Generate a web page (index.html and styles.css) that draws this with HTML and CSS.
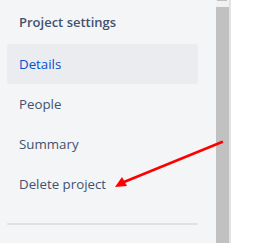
FILE: index.html
```html
<!DOCTYPE html>
<html>
<head>
<meta charset="utf-8">
<link rel="stylesheet" href="styles.css">
</head>
<body>
<div class="page">
  <nav class="sidebar">
    <div class="heading">Project settings</div>
    <ul class="menu">
      <li class="item active">Details</li>
      <li class="item">People</li>
      <li class="item">Summary</li>
      <li class="item">Delete project</li>
    </ul>
    <div class="divider"></div>
  </nav>
  <div class="scrollbar">
    <div class="track-top"><div class="nub"></div></div>
    <div class="thumb"></div>
  </div>
  <div class="edge"></div>
  <div class="rest"></div>
  <svg class="arrow" width="255" height="243" viewBox="0 0 255 243">
    <line x1="222" y1="142" x2="124" y2="182" stroke="#f00" stroke-width="2.5" stroke-linecap="round"/>
    <polygon points="115,187 122,177 127,186" fill="#f00"/>
  </svg>
</div>
</body>
</html>
```
FILE: styles.css
```css
html, body {
  margin: 0;
  padding: 0;
  background: #fff;
}
.page {
  position: relative;
  display: flex;
  width: 255px;
  height: 243px;
  overflow: hidden;
  font-family: "Open Sans", "Noto Sans", sans-serif;
}
.sidebar {
  width: 216px;
  flex: none;
  background: #f4f5f7;
  box-sizing: border-box;
  padding: 12px 18px 0 7px;
}
.heading {
  font-weight: 600;
  font-size: 13px;
  color: #42526e;
  padding-left: 12px;
  height: 20px;
  line-height: 20px;
  margin-bottom: 12px;
}
.menu {
  list-style: none;
  margin: 0;
  padding: 0;
}
.item {
  height: 40px;
  line-height: 40px;
  padding-left: 12px;
  font-size: 13.3px;
  color: #42526e;
  border-radius: 3px;
}
.item.active {
  background: #ebecf0;
  color: #0052cc;
}
.divider {
  margin-top: 19px;
  height: 2px;
  background: #dfe1e6;
  border-radius: 1px;
}
.scrollbar {
  width: 13px;
  flex: none;
  display: flex;
  flex-direction: column;
}
.track-top {
  height: 7px;
  background: #f1f1f1;
}
.nub {
  width: 10px;
  height: 1px;
  margin-left: 1px;
  background: #c1c1c1;
}
.thumb {
  flex: 1;
  background: #c1c1c1;
}
.edge {
  width: 2px;
  flex: none;
  background: #e3e3e3;
}
.rest {
  flex: 1;
  background: #fff;
}
.arrow {
  position: absolute;
  left: 0;
  top: 0;
  pointer-events: none;
}
```
